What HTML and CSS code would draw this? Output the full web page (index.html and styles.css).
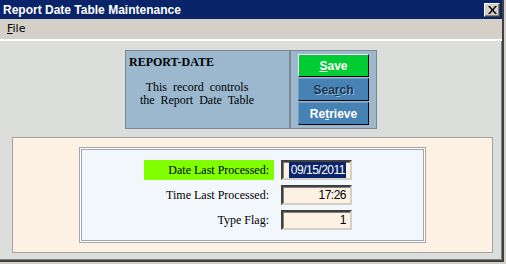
FILE: index.html
```html
<!DOCTYPE html>
<html lang="en">
<head>
    <meta charset="UTF-8">
    <title>Report Date Table Maintenance</title>
    <link rel="stylesheet" href="styles.css">
</head>
<body>
    <div class="window">
        <div class="titlebar">
            <span class="title">Report Date Table Maintenance</span>
            <span class="close-btn">
                <svg width="9" height="8" viewBox="0 0 9 8">
                    <path d="M0 0h2l2.5 3 2.5-3h2L5.5 4 9 8H7L4.5 5 2 8H0l3.5-4z" fill="#000"/>
                </svg>
            </span>
        </div>
        <div class="menubar">
            <span class="menu-item"><u>F</u>ile</span>
        </div>

        <div class="content">
            <div class="record-panel">
                <div class="record-info">
                    <div class="record-name">REPORT-DATE</div>
                    <div class="record-desc">
                        This record controls<br>
                        the Report Date Table
                    </div>
                </div>
                <div class="record-actions">
                    <button class="btn btn-save"><u>S</u>ave</button>
                    <button class="btn btn-search">Sea<u>r</u>ch</button>
                    <button class="btn btn-retrieve">Re<u>t</u>rieve</button>
                </div>
            </div>

            <div class="form-area">
                <div class="form-box">
                    <div class="form-row">
                        <label class="field-label active">Date Last Processed:</label>
                        <div class="field-input"><span class="selected">09/15/2011</span></div>
                    </div>
                    <div class="form-row">
                        <label class="field-label">Time Last Processed:</label>
                        <div class="field-input">17:26</div>
                    </div>
                    <div class="form-row">
                        <label class="field-label">Type Flag:</label>
                        <div class="field-input">1</div>
                    </div>
                </div>
            </div>
        </div>
    </div>
</body>
</html>
```

FILE: styles.css
```css
* {
    box-sizing: border-box;
    margin: 0;
    padding: 0;
}

body {
    background: #d4d0c8;
    width: 506px;
    height: 264px;
    overflow: hidden;
    font-family: 'Liberation Sans', Arial, sans-serif;
}

.window {
    width: 504px;
    height: 262px;
    background: #dcdedc;
    border-right: 2px solid #404040;
    border-bottom: 2px solid #404040;
    box-shadow: inset -1px -1px 0 #808080;
}

.titlebar {
    height: 19px;
    background: #0a246a;
    color: white;
    display: flex;
    align-items: center;
    justify-content: space-between;
    padding: 0 2px 0 3px;
}

.title {
    font-weight: bold;
    font-size: 12px;
}

.close-btn {
    width: 16px;
    height: 14px;
    background: #d4d0c8;
    border: 1px solid;
    border-color: #fff #404040 #404040 #fff;
    box-shadow: inset -1px -1px 0 #808080;
    display: flex;
    align-items: center;
    justify-content: center;
}

.menubar {
    height: 22px;
    background: #d4d0c8;
    border-bottom: 2px solid #fff;
    padding: 3px 0 0 7px;
    font-size: 11px;
    color: #000;
}

.menu-item {
    font-family: 'DejaVu Sans', sans-serif;
    font-size: 11px;
}

.content {
    padding-top: 9px;
}

.record-panel {
    display: flex;
    width: 252px;
    height: 79px;
    margin-left: 125px;
    background: #9bb8ce;
}

.record-info {
    width: 166px;
    border: 1px solid #7d8790;
    border-right-width: 2px;
    padding: 4px 3px;
    font-family: 'Liberation Serif', 'Times New Roman', serif;
    color: #000;
}

.record-name {
    font-weight: bold;
    font-size: 12px;
}

.record-desc {
    margin-top: 11px;
    width: 126px;
    margin-left: 5px;
    text-align: center;
    font-size: 12px;
    line-height: 13px;
    word-spacing: 3px;
}

.record-actions {
    flex: 1;
    border: 1px solid #7d8790;
    border-left: none;
    padding: 3px 0 0 7px;
    display: flex;
    flex-direction: column;
    gap: 1px;
}

.btn {
    width: 71px;
    height: 23px;
    border: 1px solid;
    font-family: 'Liberation Sans', Arial, sans-serif;
    font-weight: bold;
    font-size: 12px;
    color: #fff;
    background: #4682b4;
    border-color: #6d9bc3 #000 #000 #6d9bc3;
}

.btn-save {
    background: #00cc33;
    border-color: #fff #000 #000 #fff;
}

.btn-search {
    color: #1c3550;
    text-shadow: 1px 1px 0 #8fb6d8;
}

.form-area {
    margin: 8px 0 0 12px;
    width: 481px;
    height: 116px;
    background: #fcf1e3;
    border: 1px solid #a3a3a3;
    padding-top: 9px;
}

.form-box {
    margin-left: 66px;
    width: 347px;
    height: 96px;
    background: #f2f7fb;
    border: 1px solid #a3a7ab;
    box-shadow: inset 0 0 0 1px #fff, inset 0 0 0 2px #a3a7ab;
    padding: 12px 0 0 64px;
    display: flex;
    flex-direction: column;
    gap: 5px;
}

.form-row {
    display: flex;
    align-items: center;
    gap: 7px;
}

.field-label {
    width: 130px;
    height: 20px;
    line-height: 20px;
    padding-right: 5px;
    text-align: right;
    font-family: 'Liberation Serif', 'Times New Roman', serif;
    font-size: 12px;
    color: #000;
}

.field-label.active {
    background: #80ff00;
}

.field-input {
    width: 71px;
    height: 20px;
    background: #fcf1e3;
    border: 2px solid;
    border-color: #404040 #d4d0c8 #d4d0c8 #404040;
    box-shadow: inset 1px 1px 0 #808080;
    text-align: right;
    padding-right: 4px;
    font-size: 12px;
    letter-spacing: -0.5px;
    line-height: 16px;
    color: #000;
}

.selected {
    background: #0a246a;
    color: #fff;
    padding: 1px 1px 1px 2px;
}
```
